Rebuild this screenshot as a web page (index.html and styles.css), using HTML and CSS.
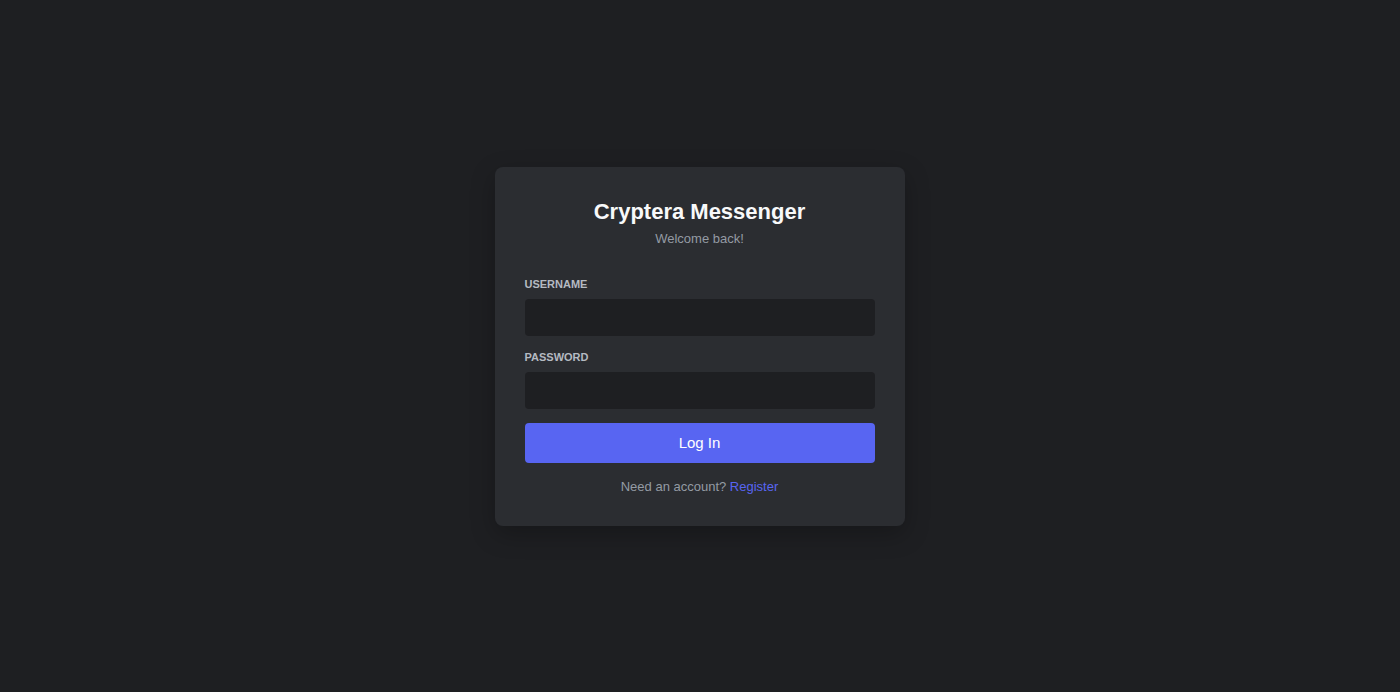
FILE: index.html
```html
<!DOCTYPE html>
<html lang="en">
<head>
<meta charset="utf-8">
<title>Cryptera Messenger</title>
<link rel="stylesheet" href="styles.css">
</head>
<body>
<main class="page">
  <form class="card">
    <h1 class="title">Cryptera Messenger</h1>
    <p class="subtitle">Welcome back!</p>
    <div class="field">
      <label class="label" for="username">USERNAME</label>
      <input class="input" id="username" type="text">
    </div>
    <div class="field">
      <label class="label" for="password">PASSWORD</label>
      <input class="input" id="password" type="password">
    </div>
    <button class="button" type="button">Log In</button>
    <p class="footer">Need an account? <a class="link" href="#">Register</a></p>
  </form>
</main>
</body>
</html>
```

FILE: styles.css
```css
* { box-sizing: border-box; }
html, body {
  margin: 0;
  height: 100%;
  background: #1e1f22;
  font-family: "Liberation Sans", Arial, sans-serif;
}
.page {
  height: 100%;
  display: flex;
  align-items: center;
  justify-content: center;
  padding-right: 1px;
}
.card {
  width: 410px;
  padding: 30px 30px 31px;
  background: #2b2d31;
  border-radius: 8px;
  box-shadow: 0 8px 24px rgba(0, 0, 0, 0.25);
  display: flex;
  flex-direction: column;
}
.title {
  margin: 0;
  font-size: 22px;
  line-height: 30px;
  font-weight: 700;
  color: #f8f9fa;
  text-align: center;
}
.subtitle {
  margin: 4px 0 0;
  font-size: 13px;
  line-height: 16px;
  color: #949ba4;
  text-align: center;
}
.field {
  display: flex;
  flex-direction: column;
  gap: 8px;
  margin-bottom: 14px;
}
.subtitle + .field { margin-top: 30px; }
.label {
  font-size: 11px;
  line-height: 14px;
  font-weight: 700;
  color: #b5bac1;
}
.input {
  height: 37px;
  width: 100%;
  border: none;
  border-radius: 4px;
  background: #1e1f22;
  color: #dbdee1;
  padding: 0 10px;
  font: inherit;
  outline: none;
}
.button {
  height: 40px;
  width: 100%;
  border: none;
  border-radius: 4px;
  background: #5865f2;
  color: #ffffff;
  font-family: inherit;
  font-size: 15px;
  cursor: pointer;
}
.footer {
  margin: 16px 0 0;
  font-size: 13px;
  line-height: 16px;
  color: #949ba4;
  text-align: center;
}
.link {
  color: #5865f2;
  text-decoration: none;
}
```
